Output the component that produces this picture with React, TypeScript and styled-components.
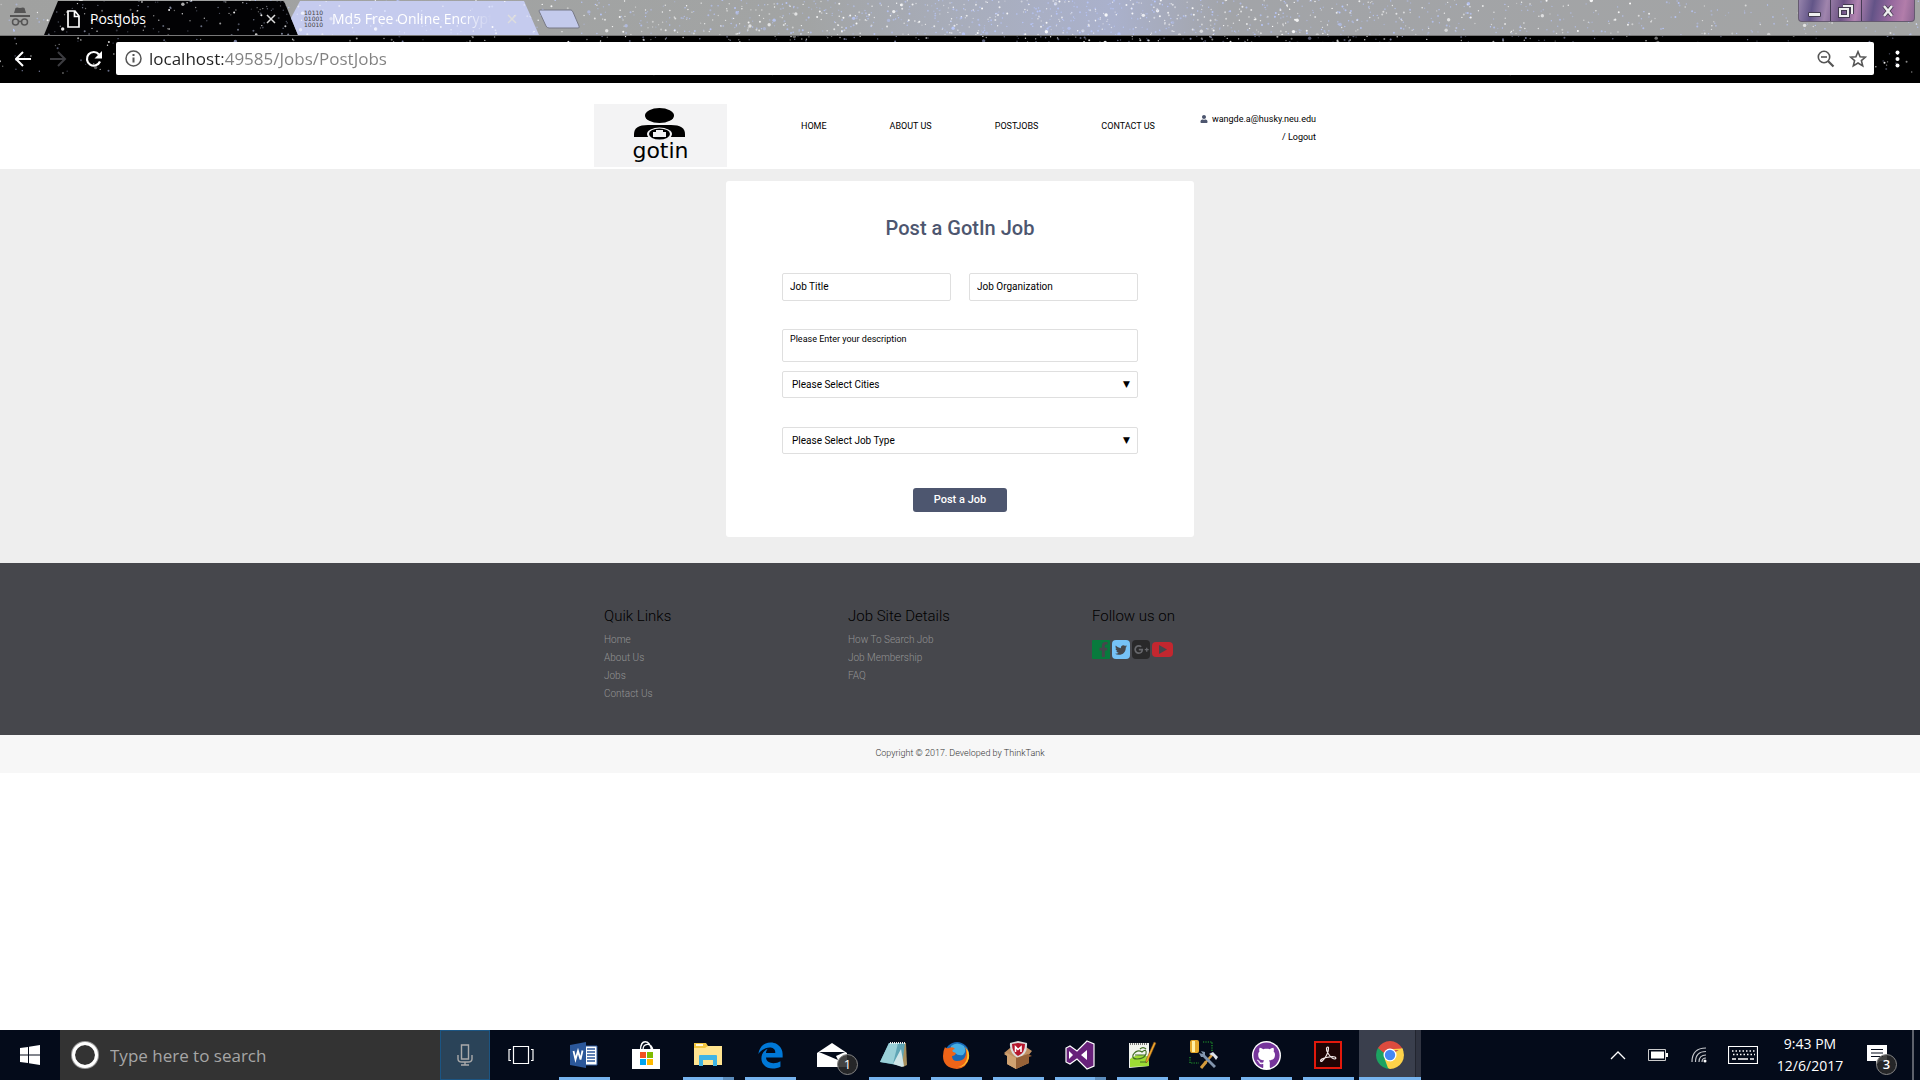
import React from "react";
import styled, { createGlobalStyle } from "styled-components";
import { FaEdgeLegacy, FaFacebookF, FaGithub, FaGooglePlusG, FaTwitter, FaUser } from "react-icons/fa";

const Global = createGlobalStyle`
  * { box-sizing: border-box; }
  body { margin: 0; background: #fff; font-family: Roboto, "Noto Sans", sans-serif; color: #000; }
  a { color: inherit; text-decoration: none; }
  button, input, select, textarea { font-family: inherit; margin: 0; }
  button { border: 0; padding: 0; background: none; color: inherit; cursor: pointer; }
  ul { list-style: none; margin: 0; padding: 0; }
`;

const systemFont = `"Open Sans", "Noto Sans", sans-serif`;

/* ---------- starry browser theme ---------- */

const StarCanvas = styled.svg`
  position: absolute;
  inset: 0;
  width: 100%;
  height: 100%;
  pointer-events: none;
`;

function makeRandom(seed: number) {
  let s = seed;
  return () => {
    s = (s * 16807) % 2147483647;
    return s / 2147483647;
  };
}

interface StarsProps {
  seed: number;
  count: number;
  tint: string;
  cluster?: boolean;
  depth?: number;
}

function Stars({ seed, count, tint, cluster, depth = 100 }: StarsProps) {
  const random = makeRandom(seed);
  const stars = Array.from({ length: count }, (_, i) => {
    const dense = cluster && i % 5 > 1;
    const x = dense ? 55 + (random() + random() + random() - 1.5) * 34 : random() * 100;
    const y = random() * depth;
    const big = random();
    return (
      <circle
        key={i}
        cx={`${x.toFixed(2)}%`}
        cy={`${y.toFixed(1)}%`}
        r={big > 0.96 ? 1.7 : big > 0.7 ? 1 : 0.7}
        fill={random() > 0.45 ? tint : "#fff"}
        opacity={(0.35 + random() * 0.6).toFixed(2)}
      />
    );
  });
  return <StarCanvas aria-hidden="true">{stars}</StarCanvas>;
}

const Browser = styled.header`
  font-family: ${systemFont};
  background: #000;
`;

const TabStrip = styled.div`
  position: relative;
  display: flex;
  height: 36px;
  background: linear-gradient(90deg, #a0a1a0 0, #a2a4a4 42%, #a8adbb 50%, #aab1cc 58%, #a2a4a8 64%, #a3a4a4 100%);
  border-bottom: 1px solid #777;
`;

const Incognito = styled.div`
  position: relative;
  width: 44px;
  padding: 6px 0 0 10px;
`;

const TabShape = styled.div<{ $active?: boolean }>`
  position: relative;
  display: flex;
  align-items: center;
  width: ${(p) => (p.$active ? 254 : 248)}px;
  height: 35px;
  margin-left: ${(p) => (p.$active ? 0 : -7)}px;
  padding: 3px 19px 0 ${(p) => (p.$active ? 22 : 13)}px;
  gap: 9px;
  color: #fff;
  background: ${(p) => (p.$active ? "#020204" : "#c5cbee")};
  clip-path: ${(p) =>
    p.$active
      ? "polygon(14px 1px, 240px 1px, 254px 100%, 0 100%)"
      : "polygon(9px 1px, 233px 1px, 248px 100%, 7px 100%, 0 18px)"};
`;

const TabTitle = styled.span<{ $fade?: boolean }>`
  position: relative;
  flex: 1;
  overflow: hidden;
  white-space: nowrap;
  font-size: 14px;
  line-height: 20px;
  mask-image: ${(p) => (p.$fade ? "linear-gradient(90deg, #000 80%, transparent 98%)" : "none")};
`;

const TabClose = styled.button`
  position: relative;
  display: flex;
  width: 16px;
  height: 16px;
  align-items: center;
  justify-content: center;
`;

const BinaryIcon = styled.span`
  position: relative;
  width: 19px;
  color: #444;
  font: 6px/6px "DejaVu Sans", sans-serif;
`;

const NewTab = styled.button`
  position: relative;
  width: 43px;
  height: 20px;
  margin: 9px 0 0 -1px;
`;

const WindowControls = styled.div`
  position: relative;
  display: flex;
  height: 22px;
  margin: 0 5px 0 auto;
  overflow: hidden;
  border: 1px solid #655a70;
  border-top: 0;
  border-radius: 0 0 4px 4px;
  background: linear-gradient(100deg, #9583ab 0, #625588 12%, #a085ad 24%, #6c5284 38%, #b183b0 50%, #635387 64%, #95689d 78%, #b27daa 90%, #8b6592 100%);
`;

const WindowButton = styled.button<{ $wide?: boolean }>`
  display: flex;
  width: ${(p) => (p.$wide ? 53 : 31)}px;
  height: 22px;
  align-items: center;
  justify-content: center;
  & + & { border-left: 1px solid #453b55; }
`;

const Toolbar = styled.div`
  position: relative;
  display: flex;
  align-items: center;
  height: 47px;
  padding: 0 16px 2px 15px;
`;

const NavButtons = styled.div`
  position: relative;
  display: flex;
  gap: 18px;
  width: 101px;
`;

const IconButton = styled.button`
  display: flex;
`;

const Omnibox = styled.form`
  position: relative;
  display: flex;
  flex: 1;
  align-items: center;
  height: 33px;
  padding: 0 7px 0 9px;
  border-radius: 2px;
  background: #fff;
`;

const Address = styled.input`
  flex: 1;
  min-width: 0;
  height: 30px;
  padding: 0;
  margin: 0 7px;
  border: 0;
  outline: 0;
  font-size: 17px;
  font-weight: 400;
  color: transparent;
  background: linear-gradient(90deg, #222 74px, #808080 74px);
  background-clip: text;
  -webkit-background-clip: text;
`;

const OmniActions = styled.div`
  display: flex;
  gap: 14px;
`;

const MenuButton = styled(IconButton)`
  position: relative;
  width: 30px;
  justify-content: flex-end;
`;

/* ---------- web page ---------- */

const Screen = styled.div`
  display: flex;
  flex-direction: column;
  min-height: 100vh;
`;

const Page = styled.div`
  flex: 1;
`;

const Container = styled.div`
  width: 100%;
  max-width: 732px;
  margin: 0 auto;
`;

const SiteHeader = styled(Container)`
  display: flex;
  height: 86px;
`;

const LogoLink = styled.a`
  position: relative;
  width: 133px;
  height: 63px;
  margin: 21px 74px 0 0;
  background: #f3f3f4;
`;

const LogoWord = styled.span`
  position: absolute;
  left: 0;
  right: 0;
  bottom: 5px;
  text-align: center;
  font: 22px/22px "DejaVu Sans", sans-serif;
`;

const SiteNav = styled.nav`
  display: flex;
  align-items: center;
  gap: 63px;
  font-size: 9px;
  line-height: 16px;
  white-space: nowrap;
`;

const Account = styled.div`
  display: flex;
  flex-direction: column;
  justify-content: center;
  align-items: flex-end;
  margin-left: auto;
  padding: 4px 10px 0 0;
  font-size: 9px;
  line-height: 18px;
  white-space: nowrap;
  svg { margin-right: 4px; color: #4d566f; vertical-align: -1px; }
`;

const Main = styled.main`
  padding: 12px 0 26px;
  background: #eee;
`;

const Card = styled.form`
  display: flex;
  flex-direction: column;
  width: 468px;
  max-width: 100%;
  margin: 0 auto;
  padding: 34px 56px 25px;
  border-radius: 3px;
  background: #fff;
`;

const Title = styled.h1`
  margin: 0 0 32px;
  text-align: center;
  color: #4d566f;
  font-size: 20px;
  font-weight: 500;
  line-height: 26px;
`;

const FieldRow = styled.div`
  display: flex;
  gap: 18px;
  margin-bottom: 28px;
`;

const fieldBox = `
  width: 100%;
  border: 1px solid #dfdfdf;
  border-radius: 2px;
  background: #fff;
  color: #000;
  outline: 0;
`;

const TextField = styled.input`
  ${fieldBox}
  flex: 1;
  min-width: 0;
  height: 28px;
  padding: 0 7px 2px;
  font-size: 10px;
  &::placeholder { color: #000; opacity: 1; }
`;

const Description = styled.textarea`
  ${fieldBox}
  display: block;
  height: 33px;
  margin-bottom: 9px;
  padding: 2px 7px;
  font-size: 9px;
  line-height: 14px;
  resize: none;
  &::placeholder { color: #000; opacity: 1; }
`;

const SelectWrap = styled.div`
  position: relative;
  margin-bottom: 29px;
  &::after {
    content: "▼";
    position: absolute;
    top: 0;
    right: 8px;
    font: 9px/26px "DejaVu Sans", sans-serif;
    pointer-events: none;
  }
`;

const Select = styled.select`
  ${fieldBox}
  display: block;
  appearance: none;
  height: 27px;
  padding: 0 9px;
  font-size: 10px;
`;

const Submit = styled.button`
  align-self: center;
  width: 94px;
  height: 24px;
  margin-top: 5px;
  border-radius: 3px;
  background: #4d566f;
  color: #fff;
  font-size: 11px;
  font-weight: 500;
  line-height: 22px;
`;

const FooterBand = styled.footer`
  background: #46474c;
`;

const FooterColumns = styled(Container)`
  display: grid;
  grid-template-columns: repeat(3, 1fr);
  padding: 43px 0 32px;
`;

const FooterColumn = styled.section`
  padding-left: 10px;
`;

const FooterHeading = styled.h2`
  margin: 0 0 5px;
  color: #000;
  font-size: 15px;
  font-weight: 300;
  line-height: 20px;
`;

const FooterLinks = styled.ul`
  color: #949494;
  font-size: 10px;
  font-weight: 300;
  line-height: 18px;
`;

const SocialRow = styled.div`
  display: flex;
  align-items: center;
  gap: 2px;
  padding-top: 9px;
`;

const Social = styled.a<{ $bg: string; $w?: number; $h?: number; $r?: number }>`
  display: flex;
  align-items: center;
  justify-content: center;
  width: ${(p) => p.$w ?? 18}px;
  height: ${(p) => p.$h ?? 19}px;
  border-radius: ${(p) => p.$r ?? 4}px;
  background: ${(p) => p.$bg};
  color: #46474c;
`;

const Copyright = styled.div`
  padding-bottom: 2px;
  background: #f7f7f7;
  color: #333;
  text-align: center;
  font-size: 9px;
  font-weight: 300;
  line-height: 36px;
`;

/* ---------- taskbar ---------- */

const Taskbar = styled.nav`
  display: flex;
  height: 50px;
  background: #040b1a;
  color: #fff;
  font-family: ${systemFont};
`;

const TaskButton = styled.button<{ $w: number }>`
  display: flex;
  align-items: center;
  justify-content: center;
  width: ${(p) => p.$w}px;
`;

const Search = styled.label`
  display: flex;
  align-items: center;
  width: 380px;
  padding-left: 11px;
  gap: 11px;
  background: #333;
`;

const SearchInput = styled.input`
  flex: 1;
  min-width: 0;
  padding: 0;
  border: 0;
  outline: 0;
  background: none;
  color: #ddd;
  font-size: 17px;
  &::placeholder { color: #a6a6a6; opacity: 1; }
`;

const MicButton = styled(TaskButton)`
  border: 1px solid #1b5583;
  background: #2a4358;
`;

const AppButton = styled.button<{ $running?: boolean; $multi?: boolean; $current?: boolean }>`
  position: relative;
  display: flex;
  align-items: center;
  justify-content: center;
  width: 62px;
  background: ${(p) => (p.$current ? "linear-gradient(90deg, #3a3f4d 56px, #22252f 56px, #22252f 57px, #303441 57px)" : "none")};
  &::after {
    content: "";
    position: absolute;
    bottom: 0;
    left: ${(p) => (p.$current ? 0 : 6)}px;
    right: ${(p) => (p.$current ? 0 : 5)}px;
    height: 3px;
    background: ${(p) =>
      !p.$running ? "none" : p.$multi ? "linear-gradient(90deg, #76b3ee 40px, #5c8dbd 40px)" : "#76b3ee"};
  }
`;

const Badge = styled.span`
  position: absolute;
  left: 36px;
  top: 24px;
  width: 21px;
  height: 21px;
  border: 1px solid #858585;
  border-radius: 50%;
  background: rgba(42, 42, 42, 0.88);
  font-size: 13px;
  line-height: 18px;
  text-align: center;
`;

const Tray = styled.div`
  display: flex;
  margin-left: auto;
  padding-right: 6px;
`;

const Clock = styled.button`
  width: 88px;
  padding-bottom: 1px;
  font-size: 14px;
  line-height: 22px;
`;

const Notifications = styled.button`
  position: relative;
  display: flex;
  width: 60px;
  padding: 15px 0 0 13px;
  border-right: 2px solid #5d616b;
  ${Badge} { left: 22px; font-weight: 600; }
`;

/* ---------- taskbar icons ---------- */

const WordIcon = () => (
  <svg width="28" height="28" viewBox="0 0 28 28">
    <path d="M14 5h13v19H14z" fill="#fff" stroke="#2b579a" />
    <path d="M17 8h8M17 11h8M17 14h8M17 17h8M17 20h8" stroke="#2b579a" strokeWidth="1.3" />
    <path d="M0 4 16 1v26L0 24z" fill="#2b579a" />
    <path d="m3.500 10 2 8.500L8 10l2.500 8.500 2-9" fill="none" stroke="#fff" strokeWidth="1.800" />
  </svg>
);
const StoreIcon = () => (
  <svg width="30" height="30" viewBox="0 0 30 30">
    <path d="M9.500 10c0-11 9-11 11 0M12 10c0-7 8-8 10 0" fill="none" stroke="#fff" strokeWidth="1.300" />
    <path d="M1 9h28v20H1z" fill="#fff" />
    <path d="M9 12h6v6H9z" fill="#f25022" />
    <path d="M16 12h6v6h-6z" fill="#7fba00" />
    <path d="M9 19h6v6H9z" fill="#00a4ef" />
    <path d="M16 19h6v6h-6z" fill="#ffb900" />
  </svg>
);
const ExplorerIcon = () => (
  <svg width="28" height="28" viewBox="0 0 28 28">
    <path d="M0 2h12l2 3h14v4H0z" fill="#f2c641" />
    <path d="M2 3h7v2H2z" fill="#fff8dc" />
    <path d="M0 7h11l3-2h14v19H0z" fill="#ffe490" />
    <path d="M5 25V15q0-1 1-1h16q1 0 1 1v10h-4v-6H9v6z" fill="#3fb4e5" />
  </svg>
);
const MailIcon = () => (
  <svg width="32" height="28" viewBox="0 0 32 28">
    <path d="M1 12 16 2l15 10v14H1z" fill="#fff" />
    <path d="M3 11h26l-9 4 2 4z" fill="#040b1a" />
  </svg>
);
const NotepadIcon = () => (
  <svg width="30" height="30" viewBox="0 0 30 30">
    <path d="M11 3h16l1 22-4 2z" fill="#a78f5d" />
    <path d="M10 3h16l-3 23-22-4z" fill="#5fa5b5" />
    <path d="M10 3h9l-5 21-13-2z" fill="#9ad0d8" />
    <path d="m14 24 8-15 3 17-2 1z" fill="#cfe5e8" />
    <path d="M11 3h15" stroke="#eee" strokeWidth="2" strokeDasharray="1 1" />
  </svg>
);
const FirefoxIcon = () => (
  <svg width="28" height="28" viewBox="0 0 28 28">
    <circle cx="15" cy="13" r="12" fill="#1768b5" />
    <path d="M9 5q6-5 13 0 3 5-1 9-5 1-8-2-5-1-4-7z" fill="#46aee3" />
    <path d="M3 6q1 2 4 1 4-2 6 1-4 1-2 3l3 1q-1 3-4 3 0 5 5 5 6 0 8-4 2-5 0-10 5 5 4 11-2 10-12 11Q1 27 1 15q0-5 2-9z" fill="#ee6418" />
    <path d="M23 6q5 5 4 11-3 9-11 9 8-2 9-9 1-6-2-11z" fill="#fbc42d" />
  </svg>
);
const McAfeeIcon = () => (
  <svg width="30" height="30" viewBox="0 0 30 30">
    <path d="m1 13 6-5 8 4 8-5 6 4-4 5 1 7-13 6-9-5v-9z" fill="#c09062" />
    <path d="m7 3 8-2 9 2q1 12-9 15Q6 13 7 3z" fill="#ddd" />
    <path d="m9 4 6-1 7 1q0 9-7 12Q9 12 9 4z" fill="#b5162c" />
    <path d="M12.500 12V7l2.500 2.500L18 7v5" fill="none" stroke="#fff" strokeWidth="1.600" />
    <path d="m1 14 3-1 9 5v11l-9-5v-8z" fill="#d0a271" />
    <path d="m13 18 12-4 4 2-3 1v6l-13 6z" fill="#976238" />
  </svg>
);
const VisualStudioIcon = () => (
  <svg width="30" height="30" viewBox="0 0 30 30">
    <path d="m22 1 7 3v22l-7 3-10-10-7 5-4-2V8l4-2 7 5z" fill="#68217a" stroke="#fff" strokeWidth="1.200" />
    <path d="M4 11v8l4-4zM22 10l-6 5 6 5z" fill="#fff" />
  </svg>
);
const NotepadPlusIcon = () => (
  <svg width="30" height="30" viewBox="0 0 30 30">
    <path d="M2 3h20v23L2 28z" fill="#f2f4ef" />
    <path d="M3 19q9-7 19-2v9L3 27z" fill="#9edb35" />
    <path d="M3 4h18" stroke="#777" strokeWidth="2" strokeDasharray="1 1" />
    <path d="M6 15q4-6 9-3 5-4 4 2-2 5-9 5-5 0-4-4zm2 0h10M13 9q3-3 6 0M13 22h7" fill="none" stroke="#406d22" strokeWidth="1.200" />
    <path d="m27 2 2 1-8 18-2 2v-3z" fill="#f0a52a" stroke="#6d4219" strokeWidth=".5" />
  </svg>
);
const ToolsIcon = () => (
  <svg width="30" height="30" viewBox="0 0 30 30">
    <rect x="1" width="9" height="13" rx="2" fill="#e5a92b" />
    <path d="M3 1h3v11H3z" fill="#fff0a4" />
    <path d="M14 2h9v9M1 17v6h9" fill="none" stroke="#22a32c" strokeWidth="1.200" strokeDasharray="1.200 1.200" />
    <path d="m12 28 5-6" stroke="#d59b3c" strokeWidth="3" />
    <path d="m16 23 8-9" stroke="#d59b3c" strokeWidth="2.500" />
    <path d="m20 14 4-2 5 5-2 3-3-4z" fill="#dbe3ec" />
    <path d="m10 13 2 4h2l11 11 2-2-11-11v-3l-4-1 2 3z" fill="#8295ae" />
  </svg>
);
const GithubCircle = styled.span`
  display: flex;
  padding: 1px;
  border-radius: 50%;
  background: #fff;
  color: #76359b;
`;
const AcrobatIcon = () => (
  <svg width="28" height="28" viewBox="0 0 28 28">
    <path d="M1 1h26v26H1z" fill="#1e0404" stroke="#e2190c" strokeWidth="2" />
    <path d="M12.500 7q1.500-2 2 0 0 5-4 10.500-3 4-4 2.500-.5-2 6-3.500 6-1.500 8.500-.5 2 1.500-.5 2-3-.5-6-5-2.500-3.500-2-6z" fill="none" stroke="#f3e9e9" strokeWidth="1.200" />
  </svg>
);
const ChromeIcon = () => (
  <svg width="28" height="28" viewBox="0 0 28 28">
    <path d="M14 14 1.900 7A14 14 0 0 1 26.100 7z" fill="#dd4b3e" />
    <path d="M14 14 26.100 7A14 14 0 0 1 14 28z" fill="#fdd249" />
    <path d="M14 14v14A14 14 0 0 1 1.900 7z" fill="#1ca261" />
    <path d="M14 7.500h12.300l.7 1.500H15zM8.400 17.200 14 20.500l5.600-3.200L14 28l-2-1z" fill="#fdd249" />
    <path d="M1.900 7 8.500 17.500 14 14l-4-6z" fill="#1ca261" />
    <path d="M2 7h24.100L14 8.500 8 12z" fill="#dd4b3e" />
    <circle cx="14" cy="14" r="6.500" fill="#fff" />
    <circle cx="14" cy="14" r="5.200" fill="#4587f3" />
  </svg>
);

const apps: { name: string; icon: React.ReactNode; running?: boolean; multi?: boolean; current?: boolean; badge?: string }[] = [
  { name: "Word", icon: <WordIcon />, running: true },
  { name: "Store", icon: <StoreIcon /> },
  { name: "File Explorer", icon: <ExplorerIcon />, running: true, multi: true },
  { name: "Edge", icon: <FaEdgeLegacy size={27} color="#0078d7" />, running: true },
  { name: "Mail", icon: <MailIcon />, badge: "1" },
  { name: "Notepad", icon: <NotepadIcon />, running: true },
  { name: "Firefox", icon: <FirefoxIcon />, running: true },
  { name: "McAfee", icon: <McAfeeIcon />, running: true },
  { name: "Visual Studio", icon: <VisualStudioIcon />, running: true, multi: true },
  { name: "Notepad++", icon: <NotepadPlusIcon />, running: true },
  { name: "SQL tools", icon: <ToolsIcon />, running: true },
  { name: "GitHub", icon: <GithubCircle><FaGithub size={27} /></GithubCircle>, running: true },
  { name: "Acrobat", icon: <AcrobatIcon />, running: true },
  { name: "Chrome", icon: <ChromeIcon />, running: true, current: true },
];

const CloseGlyph = () => (
  <svg width="10" height="10" viewBox="0 0 10 10">
    <path d="m1 1 8 8M9 1 1 9" stroke="#ddd" strokeWidth="1.500" />
  </svg>
);

const FileIcon = styled.svg`
  position: relative;
`;

function BrowserChrome() {
  return (
    <Browser>
      <TabStrip>
        <Stars seed={77} count={1300} tint="#b9c8ff" cluster />
        <Incognito>
          <svg width="20" height="20" viewBox="0 0 20 20">
            <path d="M5.500 2q1-1 4.500 0 3.500-1 4.500 0l1.500 5H4zM0 9h20v2H0z" fill="#555" />
            <g fill="none" stroke="#555" strokeWidth="1.500">
              <circle cx="5.500" cy="16" r="3" />
              <circle cx="14.500" cy="16" r="3" />
              <path d="M8.500 16q1.500-1.500 3 0" />
            </g>
          </svg>
        </Incognito>
        <TabShape $active>
          <Stars seed={19} count={130} tint="#8c93aa" />
          <FileIcon width="15" height="18" viewBox="0 0 15 18">
            <path d="M2 1h7l4 5v11H2zM8.500 1v5.500H13" fill="none" stroke="#fff" strokeWidth="1.700" />
          </FileIcon>
          <TabTitle>PostJobs</TabTitle>
          <TabClose aria-label="Close PostJobs"><CloseGlyph /></TabClose>
        </TabShape>
        <TabShape>
          <Stars seed={41} count={70} tint="#dfe5ff" />
          <BinaryIcon>10110 01001 10010</BinaryIcon>
          <TabTitle $fade>Md5 Free Online Encrypt</TabTitle>
          <TabClose aria-label="Close Md5"><CloseGlyph /></TabClose>
        </TabShape>
        <NewTab aria-label="New tab">
          <svg width="43" height="20" viewBox="0 0 43 20">
            <path d="M1 2q0-1 1-1h31q1 0 2 2l6 14q1 2-1 2H11q-2 0-3-2z" fill="#c3caec" stroke="#777985" />
          </svg>
        </NewTab>
        <WindowControls>
          <WindowButton aria-label="Minimize">
            <svg width="15" height="14"><path d="M1.500 8.500h12v4h-12z" fill="#eee" stroke="#443b50" /></svg>
          </WindowButton>
          <WindowButton aria-label="Restore">
            <svg width="18" height="16" fill="none">
              <path d="M6 3h9v8M3 6h8v7H3z" stroke="#443b50" strokeWidth="4" />
              <path d="M6 3h9v8M3 6h8v7H3z" stroke="#eee" strokeWidth="2" />
            </svg>
          </WindowButton>
          <WindowButton $wide aria-label="Close">
            <svg width="14" height="14" fill="none">
              <path d="m3 2 8 10M11 2 3 12" stroke="#443b50" strokeWidth="4" />
              <path d="m3 2 8 10M11 2 3 12" stroke="#eee" strokeWidth="2.500" />
            </svg>
          </WindowButton>
        </WindowControls>
      </TabStrip>
      <Toolbar>
        <Stars seed={5} count={1100} tint="#7f86a8" cluster depth={82} />
        <NavButtons>
          <IconButton aria-label="Back">
            <svg width="17" height="18" viewBox="0 0 17 18"><path d="M8 2 1 9l7 7M1 9h15" fill="none" stroke="#fff" strokeWidth="2" /></svg>
          </IconButton>
          <IconButton aria-label="Forward">
            <svg width="17" height="18" viewBox="0 0 17 18"><path d="m8 2 7 7-7 7M15 9H0" fill="none" stroke="#3c3c40" strokeWidth="2" /></svg>
          </IconButton>
          <IconButton aria-label="Reload">
            <svg width="18" height="18" viewBox="0 0 18 18">
              <path d="M15 11.500A6.800 6.800 0 1 1 14 4.500" fill="none" stroke="#fff" strokeWidth="2.200" />
              <path d="M17 1v7.500H9.500z" fill="#fff" />
            </svg>
          </IconButton>
        </NavButtons>
        <Omnibox onSubmit={(e) => e.preventDefault()}>
          <svg width="17" height="17" viewBox="0 0 17 17" fill="none" stroke="#555" strokeWidth="1.500">
            <circle cx="8.500" cy="8.500" r="7.500" />
            <path d="M8.500 7.500v5M8.500 4v2" strokeWidth="2" />
          </svg>
          <Address aria-label="Address" defaultValue="localhost:49585/Jobs/PostJobs" />
          <OmniActions>
            <IconButton type="button" aria-label="Zoom">
              <svg width="18" height="18" viewBox="0 0 18 18" fill="none" stroke="#555" strokeWidth="1.600">
                <circle cx="7" cy="7" r="5.700" /><path d="M4 7h6" /><path d="m11 11 5.500 5.500" strokeWidth="2.200" />
              </svg>
            </IconButton>
            <IconButton type="button" aria-label="Bookmark">
              <svg width="18" height="18" viewBox="0 0 18 18">
                <path d="m9 1.700 2.100 5 5.400.4-4.100 3.500 1.300 5.300L9 13l-4.700 2.900 1.300-5.300-4.100-3.500 5.400-.4z" fill="none" stroke="#555" strokeWidth="1.600" />
              </svg>
            </IconButton>
          </OmniActions>
        </Omnibox>
        <MenuButton aria-label="Menu">
          <svg width="13" height="18" viewBox="0 0 13 18" fill="#fff">
            <circle cx="6.500" cy="2.500" r="2" /><circle cx="6.500" cy="9" r="2" /><circle cx="6.500" cy="15.500" r="2" />
          </svg>
        </MenuButton>
      </Toolbar>
    </Browser>
  );
}

function JobsPage() {
  return (
    <Page>
      <SiteHeader as="header">
        <LogoLink href="#" aria-label="gotin">
          <svg width="133" height="63" viewBox="0 0 133 63">
            <ellipse cx="65.500" cy="11.500" rx="14.500" ry="7.500" />
            <path d="M40 33v-3q0-9 14-9h23q14 0 14 9v3z" />
            <ellipse cx="65.500" cy="30" rx="12.500" ry="6.500" fill="#f3f3f4" />
            <ellipse cx="65.500" cy="30" rx="10.500" ry="5.500" />
            <path d="M59 28h13v5H59zM62 28v-2h7v2" fill="#f3f3f4" />
          </svg>
          <LogoWord>gotin</LogoWord>
        </LogoLink>
        <SiteNav>
          <a href="#">HOME</a>
          <a href="#">ABOUT US</a>
          <a href="#">POSTJOBS</a>
          <a href="#">CONTACT US</a>
        </SiteNav>
        <Account>
          <span><FaUser size={8} />wangde.a@husky.neu.edu</span>
          <span>/ <a href="#">Logout</a></span>
        </Account>
      </SiteHeader>
      <Main>
        <Card onSubmit={(e) => e.preventDefault()}>
          <Title>Post a GotIn Job</Title>
          <FieldRow>
            <TextField aria-label="Job Title" placeholder="Job Title" />
            <TextField aria-label="Job Organization" placeholder="Job Organization" />
          </FieldRow>
          <Description aria-label="Description" placeholder="Please Enter your description" />
          <SelectWrap>
            <Select aria-label="City"><option>Please Select Cities</option></Select>
          </SelectWrap>
          <SelectWrap>
            <Select aria-label="Job Type"><option>Please Select Job Type</option></Select>
          </SelectWrap>
          <Submit>Post a Job</Submit>
        </Card>
      </Main>
      <FooterBand>
        <FooterColumns>
          <FooterColumn>
            <FooterHeading>Quik Links</FooterHeading>
            <FooterLinks>
              <li><a href="#">Home</a></li>
              <li><a href="#">About Us</a></li>
              <li><a href="#">Jobs</a></li>
              <li><a href="#">Contact Us</a></li>
            </FooterLinks>
          </FooterColumn>
          <FooterColumn>
            <FooterHeading>Job Site Details</FooterHeading>
            <FooterLinks>
              <li><a href="#">How To Search Job</a></li>
              <li><a href="#">Job Membership</a></li>
              <li><a href="#">FAQ</a></li>
            </FooterLinks>
          </FooterColumn>
          <FooterColumn>
            <FooterHeading>Follow us on</FooterHeading>
            <SocialRow>
              <Social href="#" aria-label="Facebook" $bg="#087a3d" $r={1}><FaFacebookF size={15} style={{ marginLeft: 5 }} /></Social>
              <Social href="#" aria-label="Twitter" $bg="#76c2f7"><FaTwitter size={12} /></Social>
              <Social href="#" aria-label="Google Plus" $bg="#29292a"><FaGooglePlusG size={15} color="#66676b" /></Social>
              <Social href="#" aria-label="YouTube" $bg="#c3272f" $w={21} $h={15}>
                <svg width="9" height="9" fill="currentColor"><path d="m1 0 8 4.500L1 9z" /></svg>
              </Social>
            </SocialRow>
          </FooterColumn>
        </FooterColumns>
      </FooterBand>
      <Copyright>Copyright © 2017. Developed by ThinkTank</Copyright>
    </Page>
  );
}

function WindowsTaskbar() {
  return (
    <Taskbar>
      <TaskButton $w={60} aria-label="Start">
        <svg width="20" height="20" viewBox="0 0 20 20" fill="#fff">
          <path d="m0 3 8-1.100v7.600H0zM9 1.700 20 0v9.500H9zM0 10.500h8v7.600L0 17zM9 10.500h11V20L9 18.300z" />
        </svg>
      </TaskButton>
      <Search>
        <svg width="28" height="28" viewBox="0 0 28 28" fill="none">
          <circle cx="14" cy="14" r="12" stroke="#999" strokeWidth="4" />
          <circle cx="14" cy="14" r="11.500" stroke="#fff" strokeWidth="3" />
        </svg>
        <SearchInput aria-label="Search" placeholder="Type here to search" />
      </Search>
      <MicButton $w={50} aria-label="Voice">
        <svg width="16" height="22" viewBox="0 0 16 22" fill="none" stroke="#aaa" strokeWidth="1.400">
          <path d="M4.500 1h7v14h-7zM1 11v4q0 3 4 3h6q4 0 4-3v-4M8 18v3M4 21h8" />
        </svg>
      </MicButton>
      <TaskButton $w={61} aria-label="Task view">
        <svg width="26" height="20" viewBox="0 0 26 20" fill="none" stroke="#fff" strokeWidth="1.200">
          <path d="M5.500 1.500h15v17h-15zM3 4.500H1v11h2M23 4.500h2v11h-2" />
        </svg>
      </TaskButton>
      <AppList>
        {apps.map((a) => (
          <AppButton key={a.name} aria-label={a.name} $running={a.running} $multi={a.multi} $current={a.current}>
            {a.icon}
            {a.badge && <Badge>{a.badge}</Badge>}
          </AppButton>
        ))}
      </AppList>
      <Tray>
        <TaskButton $w={40} aria-label="Show hidden icons">
          <svg width="16" height="10"><path d="m1 9 7-7 7 7" fill="none" stroke="#fff" strokeWidth="1.300" /></svg>
        </TaskButton>
        <TaskButton $w={40} aria-label="Battery">
          <svg width="20" height="12"><path d="M.5.500h17v11H.5z" fill="none" stroke="#ccc" /><path d="M3 2.500h13v7H3zM18 4h2v4h-2z" fill="#fff" /></svg>
        </TaskButton>
        <TaskButton $w={42} aria-label="Network">
          <svg width="16" height="16" fill="none" stroke="#c5c7cc" strokeWidth="1.200">
            <path d="M1 15Q1 1 15 1M4.500 15q0-10.500 10.500-10.500M8 15q0-7 7-7M11 15q0-4 4-4" />
            <circle cx="14" cy="14" r="1.500" fill="#fff" stroke="none" />
          </svg>
        </TaskButton>
        <TaskButton $w={46} aria-label="Touch keyboard">
          <svg width="30" height="18" fill="none" stroke="#fff">
            <path d="M.5.500h29v17H.5z" strokeWidth="1.200" />
            <path d="M4 5h23M5 8.500h22" strokeWidth="1.300" strokeDasharray="1.500 2" />
            <path d="M4 13h4M10 13h10M22 13h4" strokeWidth="1.300" />
          </svg>
        </TaskButton>
        <Clock>9:43 PM<br />12/6/2017</Clock>
        <Notifications aria-label="Notifications">
          <svg width="20" height="21" viewBox="0 0 20 21">
            <path d="M0 0h20v16H13l-4 4v-4H0z" fill="#fff" />
            <path d="M4 4.500h12M4 8h12M4 11.500h12" stroke="#040b1a" strokeWidth="1.200" />
          </svg>
          <Badge>3</Badge>
        </Notifications>
      </Tray>
    </Taskbar>
  );
}

const AppList = styled.div`
  display: flex;
  padding-left: 2px;
`;

export default function App() {
  return (
    <Screen>
      <Global />
      <BrowserChrome />
      <JobsPage />
      <WindowsTaskbar />
    </Screen>
  );
}
